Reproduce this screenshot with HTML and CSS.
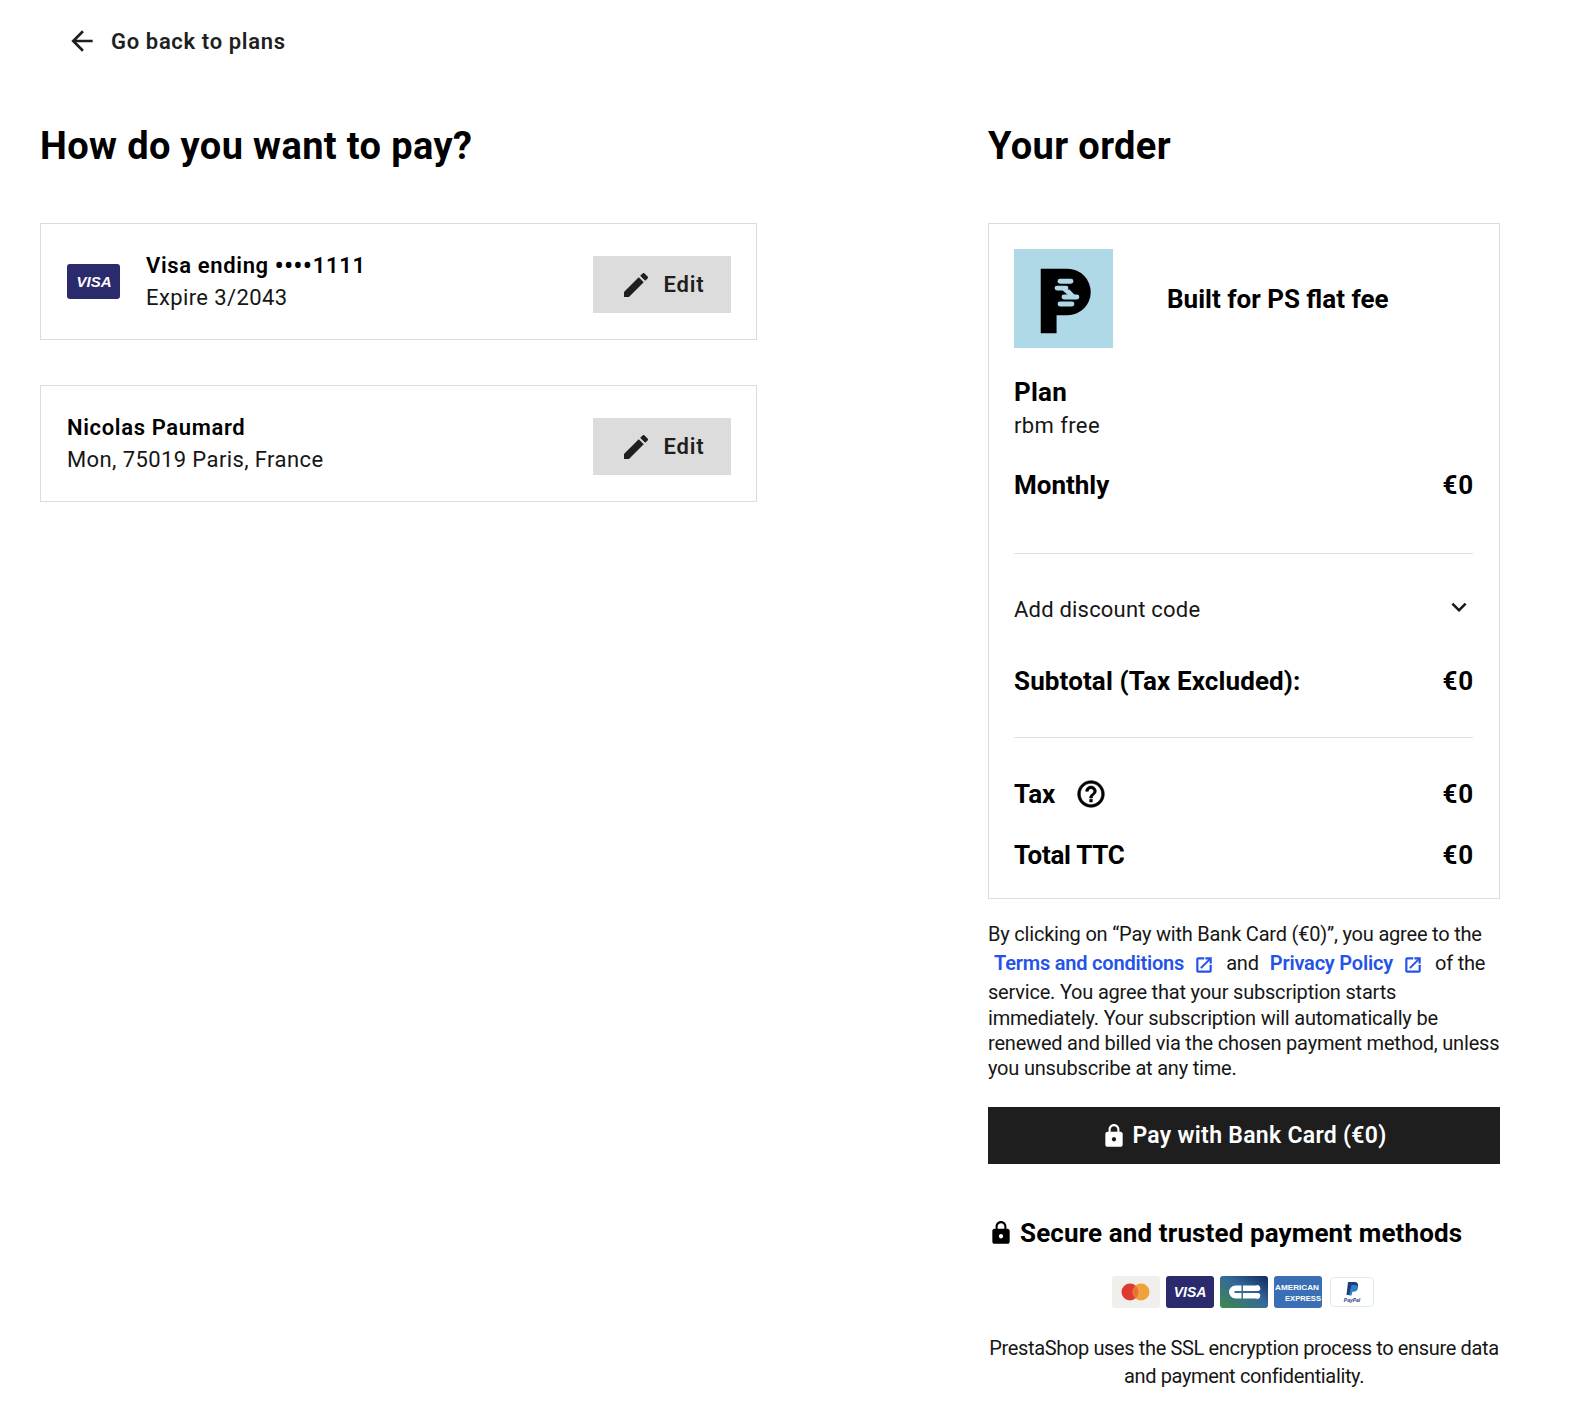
FILE: index.html
```html
<!DOCTYPE html>
<html lang="en">
<head>
<meta charset="utf-8">
<title>Checkout</title>
<link rel="stylesheet" href="styles.css">
</head>
<body>
<a class="back" href="#">
  <svg class="ico-back" viewBox="0 0 24 24"><path d="M20 11H7.83l5.59-5.59L12 4l-8 8 8 8 1.41-1.41L7.83 13H20v-2z"/></svg>
  <span>Go back to plans</span>
</a>
<main class="layout">
  <section class="col-left">
    <h1>How do you want to pay?</h1>
    <div class="box">
      <svg class="visa" viewBox="0 0 53 35"><rect width="53" height="35" rx="3" fill="#2a2a6c"/><text x="27" y="23" class="visa-t" text-anchor="middle">VISA</text></svg>
      <div class="box-text visa-text">
        <div class="strong">Visa ending <span class="dots">••••</span>1111</div>
        <div>Expire 3/2043</div>
      </div>
      <a class="edit" href="#"><svg viewBox="0 0 24 24"><path d="M3 17.25V21h3.75L17.81 9.94l-3.75-3.75L3 17.25zM20.71 7.04c.39-.39.39-1.02 0-1.41l-2.34-2.34c-.39-.39-1.02-.39-1.41 0l-1.83 1.83 3.75 3.75 1.83-1.83z"/></svg><span>Edit</span></a>
    </div>
    <div class="box box-second">
      <div class="box-text">
        <div class="strong">Nicolas Paumard</div>
        <div>Mon, 75019 Paris, France</div>
      </div>
      <a class="edit" href="#"><svg viewBox="0 0 24 24"><path d="M3 17.25V21h3.75L17.81 9.94l-3.75-3.75L3 17.25zM20.71 7.04c.39-.39.39-1.02 0-1.41l-2.34-2.34c-.39-.39-1.02-.39-1.41 0l-1.83 1.83 3.75 3.75 1.83-1.83z"/></svg><span>Edit</span></a>
    </div>
  </section>
  <section class="col-right">
    <h1>Your order</h1>
    <div class="order">
      <div class="product">
        <svg class="logo" viewBox="0 0 100 100"><rect width="100" height="100" fill="#b0d9e8"/><path d="M27 20h27a23.500 23.500 0 0 1 0 47H43v18H27z" fill="#000"/><g fill="#b0d9e8"><rect x="44" y="30" width="16" height="5" rx="2.500"/><rect x="41" y="37" width="14" height="5" rx="2.500"/><path d="M48 41l8 0 6 6-7 0z"/><rect x="48" y="46" width="18" height="5" rx="2.500"/><rect x="44" y="53" width="17" height="5" rx="2.500"/></g></svg>
        <div class="product-name">Built for PS flat fee</div>
      </div>
      <div class="plan-label">Plan</div>
      <div class="plan-value">rbm free</div>
      <div class="row row-monthly"><span>Monthly</span><span class="amt">€0</span></div>
      <hr class="sep sep-1">
      <div class="discount"><span>Add discount code</span><svg viewBox="0 0 24 24"><path d="M16.59 8.59L12 13.17 7.41 8.59 6 10l6 6 6-6z"/></svg></div>
      <div class="row row-subtotal"><span>Subtotal (Tax Excluded):</span><span class="amt">€0</span></div>
      <hr class="sep sep-2">
      <div class="row row-tax"><span class="tax-label">Tax<svg viewBox="0 0 24 24"><path d="M11 18h2v-2h-2v2zm1-16C6.48 2 2 6.48 2 12s4.48 10 10 10 10-4.48 10-10S17.52 2 12 2zm0 18c-4.41 0-8-3.59-8-8s3.59-8 8-8 8 3.59 8 8-3.59 8-8 8zm0-14c-2.21 0-4 1.79-4 4h2c0-1.100.9-2 2-2s2 .9 2 2c0 2-3 1.750-3 5h2c0-2.250 3-2.500 3-5 0-2.210-1.790-4-4-4z"/></svg></span><span class="amt">€0</span></div>
      <div class="row row-total"><span>Total TTC</span><span class="amt">€0</span></div>
    </div>
    <div class="legal">
      <div class="legal-line">By clicking on “Pay with Bank Card (€0)”, you agree to the</div>
      <div class="legal-links">
        <a href="#">Terms and conditions</a><svg viewBox="0 0 24 24"><path d="M19 19H5V5h7V3H5c-1.11 0-2 .9-2 2v14c0 1.1.89 2 2 2h14c1.1 0 2-.9 2-2v-7h-2v7zM14 3v2h3.59l-9.83 9.83 1.41 1.41L19 6.41V10h2V3h-7z"/></svg><span>and</span><a href="#">Privacy Policy</a><svg viewBox="0 0 24 24"><path d="M19 19H5V5h7V3H5c-1.11 0-2 .9-2 2v14c0 1.1.89 2 2 2h14c1.1 0 2-.9 2-2v-7h-2v7zM14 3v2h3.59l-9.83 9.83 1.41 1.41L19 6.41V10h2V3h-7z"/></svg><span>of the</span>
      </div>
      <p>service. You agree that your subscription starts<br>immediately. Your subscription will automatically be<br>renewed and billed via the chosen payment method, unless<br>you unsubscribe at any time.</p>
    </div>
    <a class="pay" href="#"><svg viewBox="0 0 24 24"><path d="M18 8h-1V6c0-2.76-2.24-5-5-5S7 3.24 7 6v2H6c-1.1 0-2 .9-2 2v10c0 1.1.9 2 2 2h12c1.1 0 2-.9 2-2V10c0-1.1-.9-2-2-2zm-6 9c-1.1 0-2-.9-2-2s.9-2 2-2 2 .9 2 2-.9 2-2 2zm3.1-9H8.9V6c0-1.71 1.39-3.1 3.1-3.1 1.71 0 3.1 1.39 3.1 3.1v2z"/></svg><span>Pay with Bank Card (€0)</span></a>
    <div class="secure"><svg viewBox="0 0 24 24"><path d="M18 8h-1V6c0-2.76-2.24-5-5-5S7 3.24 7 6v2H6c-1.1 0-2 .9-2 2v10c0 1.1.9 2 2 2h12c1.1 0 2-.9 2-2V10c0-1.1-.9-2-2-2zm-6 9c-1.1 0-2-.9-2-2s.9-2 2-2 2 .9 2 2-.9 2-2 2zm3.1-9H8.9V6c0-1.71 1.39-3.1 3.1-3.1 1.71 0 3.1 1.39 3.1 3.1v2z"/></svg><span>Secure and trusted payment methods</span></div>
    <div class="cards">
      <svg class="card" viewBox="0 0 48 32"><rect width="48" height="32" rx="3" fill="#f0efec"/><circle cx="18" cy="16" r="8.500" fill="#dd3a30"/><circle cx="29" cy="16" r="8.500" fill="#eea23a"/><path d="M23.500 9.500a8.500 8.500 0 0 1 0 13 8.500 8.500 0 0 1 0-13z" fill="#e8703a"/></svg>
      <svg class="card" viewBox="0 0 48 32"><rect width="48" height="32" rx="3" fill="#2a2a6c"/><text x="24" y="21" class="visa-t card-visa" text-anchor="middle">VISA</text></svg>
      <svg class="card" viewBox="0 0 48 32"><defs><linearGradient id="cb" x1="0" y1="1" x2="1" y2="0"><stop offset="0" stop-color="#3f8a48"/><stop offset=".55" stop-color="#35699a"/><stop offset="1" stop-color="#122a5c"/></linearGradient></defs><rect width="48" height="32" rx="3" fill="url(#cb)"/><path d="M21.500 9.500h-6a6.500 6.500 0 0 0 0 13h6V17h-7v-2h7zM23 9.500h13a3 3 0 0 1 2.500 5.500H23zM23 17h15.500a3 3 0 0 1-2.500 5.500H23z" fill="#fff"/></svg>
      <svg class="card" viewBox="0 0 48 32"><rect width="48" height="32" rx="3" fill="#3b6fb5"/><text x="1" y="14" class="amex-t" textLength="44" lengthAdjust="spacingAndGlyphs">AMERICAN</text><text x="11" y="24.500" class="amex-t" textLength="36" lengthAdjust="spacingAndGlyphs">EXPRESS</text></svg>
      <svg class="card card-pp" viewBox="0 0 44 30"><rect x=".5" y=".5" width="43" height="29" rx="3" fill="#fff" stroke="#e2e8ef"/><path d="M18 5h6c3.500 0 4.500 2 4 4.500-.6 2.800-2.700 4-5 4h-2l-1 4.500h-3.500z" fill="#1d3d80"/><path d="M21.500 8h3.500c2.500 0 3.200 1.500 2.800 3.500-.5 2.300-2.200 3.300-4 3.300h-1.500l-.8 3.700h-2.500z" fill="#2f7fc4"/><text x="22" y="25" class="pp-t" text-anchor="middle">PayPal</text></svg>
    </div>
    <p class="foot">PrestaShop uses the SSL encryption process to ensure data<br>and payment confidentiality.</p>
  </section>
</main>
</body>
</html>
```
FILE: styles.css
```css
* { box-sizing: border-box; }
html, body { margin: 0; padding: 0; background: #fff; }
body {
  font-family: Roboto, "Noto Sans", sans-serif;
  color: #161616;
  font-size: 22px;
}
a { text-decoration: none; color: inherit; }
svg { display: block; flex: none; fill: currentColor; }

.back {
  display: flex;
  align-items: center;
  height: 82px;
  padding-left: 66px;
  gap: 13px;
  font-size: 22px;
  font-weight: 600;
  letter-spacing: .65px;
  color: #1f1f1f;
}
.ico-back { width: 32px; height: 32px; }

.layout {
  display: grid;
  grid-template-columns: 717px 512px;
  column-gap: 231px;
  padding-left: 40px;
}
h1 {
  margin: 0;
  height: 141px;
  padding-top: 39px;
  font-size: 38px;
  line-height: 50px;
  font-weight: 700;
  letter-spacing: .38px;
  color: #000;
}

.box {
  display: flex;
  align-items: center;
  height: 117px;
  padding: 0 25px 0 26px;
  border: 1.5px solid #dcdcdc;
}
.box-second { margin-top: 45px; }
.visa { width: 53px; height: 35px; }
.visa-t { font: italic 700 15px "Liberation Sans", sans-serif; fill: #fff; }
.box-text { flex: 1; line-height: 32px; letter-spacing: .4px; color: #161616; }
.visa-text { margin-left: 26px; margin-top: -2px; }
.strong { font-weight: 600; letter-spacing: .65px; color: #000; }
.dots { font-family: "Noto Sans", sans-serif; letter-spacing: 1.2px; }
.edit {
  display: flex;
  align-items: center;
  justify-content: center;
  gap: 12px;
  width: 138px;
  height: 57px;
  margin-top: 6px;
  background: #dcdcdc;
  color: #1f1f1f;
  font-size: 22px;
  font-weight: 600;
  letter-spacing: .8px;
}
.edit svg { width: 32px; height: 32px; }

.order {
  height: 676px;
  padding: 25px 26px 0 25px;
  border: 1.5px solid #dcdcdc;
  color: #000;
}
.product { display: flex; align-items: center; gap: 54px; }
.logo { width: 99px; height: 99px; }
.product-name { font-size: 26px; font-weight: 700; }
.plan-label { margin-top: 27px; font-size: 26px; line-height: 34px; font-weight: 700; letter-spacing: .2px; }
.plan-value { margin-top: 1px; font-size: 22px; line-height: 32px; letter-spacing: .4px; color: #161616; }
.row { display: flex; justify-content: space-between; align-items: center; font-size: 26px; line-height: 34px; font-weight: 700; }
.amt { margin-right: -1px; letter-spacing: .8px; }
.row-monthly { margin-top: 26px; }
.sep { margin: 0; border: 0; border-top: 1px solid #e0e0e0; }
.sep-1 { margin-top: 51px; }
.discount { display: flex; justify-content: space-between; align-items: center; margin-top: 40px; line-height: 32px; letter-spacing: .2px; color: #161616; }
.discount svg { width: 30px; height: 30px; margin: -7px -1px 0 0; }
.row-subtotal { margin-top: 38px; letter-spacing: .12px; }
.sep-2 { margin-top: 39px; }
.row-tax { margin-top: 39px; }
.tax-label { display: flex; align-items: center; gap: 20px; }
.tax-label svg { width: 32px; height: 32px; stroke: currentColor; stroke-width: .4px; }
.row-total { margin-top: 27px; }
.row-total span:first-child { letter-spacing: -.3px; }

.legal { margin-top: 23px; font-size: 20px; line-height: 25.3px; letter-spacing: -.2px; color: #161616; }
.legal-line { white-space: nowrap; }
.legal-links { display: flex; align-items: center; height: 33px; padding-left: 6px; white-space: nowrap; }
.legal-links a { color: #2553e8; font-weight: 600; }
.legal-links svg { width: 20px; height: 20px; margin: 2px 12px 0 10px; color: #2553e8; stroke: currentColor; stroke-width: .6px; }
.legal-links svg + span { margin-right: 11px; }
.legal p { margin: 0; white-space: nowrap; }

.pay {
  display: flex;
  align-items: center;
  justify-content: center;
  gap: 5px;
  height: 57px;
  margin-top: 26px;
  background: #1e1e1e;
  color: #fff;
  font-size: 23px;
  font-weight: 600;
  letter-spacing: .3px;
}
.pay svg { width: 26px; height: 26px; }

.secure {
  display: flex;
  align-items: center;
  gap: 6px;
  margin-top: 51px;
  font-size: 26px;
  line-height: 36px;
  font-weight: 700;
  letter-spacing: .12px;
  color: #000;
  white-space: nowrap;
}
.secure svg { width: 26px; height: 26px; }

.cards { display: flex; justify-content: center; align-items: center; gap: 6px; margin-top: 25px; padding-right: 3px; }
.card { width: 48px; height: 32px; }
.card-pp { width: 44px; height: 30px; margin-left: 2px; }
.card-visa { font-size: 14px; }
.amex-t { font: 700 7.5px "Liberation Sans", sans-serif; fill: #fff; }
.pp-t { font: italic 700 5px "Liberation Sans", sans-serif; fill: #1d3d80; }

.foot { margin: 27px 0 0; font-size: 20px; line-height: 27.3px; letter-spacing: -.36px; text-align: center; white-space: nowrap; color: #161616; }
```
